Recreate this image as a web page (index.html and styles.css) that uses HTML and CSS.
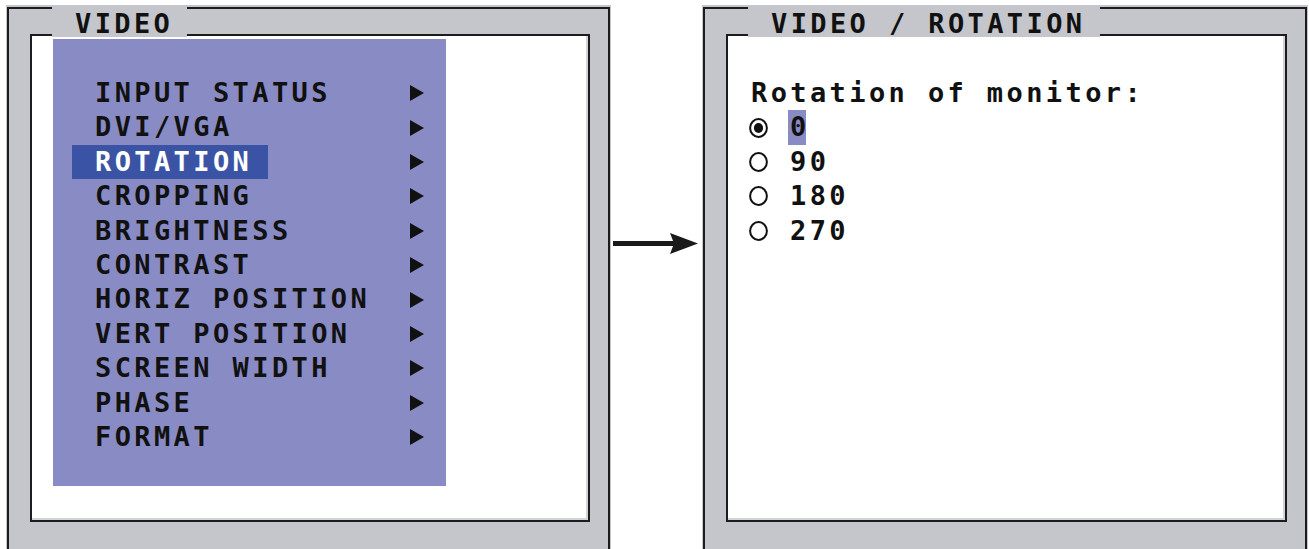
FILE: index.html
```html
<!DOCTYPE html>
<html lang="en">
<head>
<meta charset="utf-8">
<title>Video / Rotation</title>
<link rel="stylesheet" href="styles.css">
</head>
<body>
<div class="stage">
  <section class="panel">
    <div class="title">VIDEO</div>
    <div class="outer">
      <div class="inner">
        <ul class="menu">
          <li class="row"><span class="label">INPUT STATUS</span><svg class="tri" viewBox="0 0 14 16"><polygon points="0,0 14,8 0,16"/></svg></li>
          <li class="row"><span class="label">DVI/VGA</span><svg class="tri" viewBox="0 0 14 16"><polygon points="0,0 14,8 0,16"/></svg></li>
          <li class="row"><span class="label sel">ROTATION</span><svg class="tri" viewBox="0 0 14 16"><polygon points="0,0 14,8 0,16"/></svg></li>
          <li class="row"><span class="label">CROPPING</span><svg class="tri" viewBox="0 0 14 16"><polygon points="0,0 14,8 0,16"/></svg></li>
          <li class="row"><span class="label">BRIGHTNESS</span><svg class="tri" viewBox="0 0 14 16"><polygon points="0,0 14,8 0,16"/></svg></li>
          <li class="row"><span class="label">CONTRAST</span><svg class="tri" viewBox="0 0 14 16"><polygon points="0,0 14,8 0,16"/></svg></li>
          <li class="row"><span class="label">HORIZ POSITION</span><svg class="tri" viewBox="0 0 14 16"><polygon points="0,0 14,8 0,16"/></svg></li>
          <li class="row"><span class="label">VERT POSITION</span><svg class="tri" viewBox="0 0 14 16"><polygon points="0,0 14,8 0,16"/></svg></li>
          <li class="row"><span class="label">SCREEN WIDTH</span><svg class="tri" viewBox="0 0 14 16"><polygon points="0,0 14,8 0,16"/></svg></li>
          <li class="row"><span class="label">PHASE</span><svg class="tri" viewBox="0 0 14 16"><polygon points="0,0 14,8 0,16"/></svg></li>
          <li class="row"><span class="label">FORMAT</span><svg class="tri" viewBox="0 0 14 16"><polygon points="0,0 14,8 0,16"/></svg></li>
        </ul>
      </div>
    </div>
  </section>

  <div class="link">
    <svg class="bigarrow" viewBox="0 0 91 22" width="91" height="22">
      <rect x="2" y="8" width="66" height="5" fill="#1a1a1a"/>
      <polygon points="59,0 87,10.5 59,21 63,10.5" fill="#1a1a1a"/>
    </svg>
  </div>

  <section class="panel">
    <div class="title">VIDEO / ROTATION</div>
    <div class="outer">
      <div class="inner">
        <div class="options">
          <div class="heading">Rotation of monitor:</div>
          <div class="opt">
            <svg class="radio" viewBox="0 0 19 20"><ellipse cx="9.5" cy="10" rx="8.4" ry="8.9" fill="none" stroke="#111" stroke-width="2"/><ellipse cx="9.5" cy="10" rx="4.6" ry="4.9" fill="#111"/></svg>
            <span class="num cur">0</span>
          </div>
          <div class="opt">
            <svg class="radio" viewBox="0 0 19 20"><ellipse cx="9.5" cy="10" rx="8.4" ry="8.9" fill="none" stroke="#111" stroke-width="2"/></svg>
            <span class="num">90</span>
          </div>
          <div class="opt">
            <svg class="radio" viewBox="0 0 19 20"><ellipse cx="9.5" cy="10" rx="8.4" ry="8.9" fill="none" stroke="#111" stroke-width="2"/></svg>
            <span class="num">180</span>
          </div>
          <div class="opt">
            <svg class="radio" viewBox="0 0 19 20"><ellipse cx="9.5" cy="10" rx="8.4" ry="8.9" fill="none" stroke="#111" stroke-width="2"/></svg>
            <span class="num">270</span>
          </div>
        </div>
      </div>
    </div>
  </section>
</div>
</body>
</html>
```

FILE: styles.css
```css
html, body {
  margin: 0;
  padding: 0;
  background: #ffffff;
  overflow: hidden;
}

body {
  font-family: "DejaVu Sans Mono", "Liberation Mono", monospace;
  font-weight: bold;
  font-size: 27px;
  color: #111111;
}

.stage {
  display: flex;
  align-items: flex-start;
  padding: 5px 0 0 6px;
  height: 560px;
}

.panel {
  position: relative;
  width: 605px;
  height: 570px;
  box-sizing: border-box;
  padding: 2px 1px 0 1px;
  background: #c5c6cb;
  flex: none;
}

.panel + .link + .panel {
  width: 606px;
}

.title {
  position: absolute;
  left: 46px;
  top: 0;
  height: 32px;
  padding: 0 14px 0 23px;
  background: #c5c6cb;
  line-height: 37px;
  letter-spacing: 3.4px;
  white-space: pre;
  color: #111111;
}

.outer {
  height: 100%;
  box-sizing: border-box;
  border: 2px solid #1c1c1f;
  padding: 25px 18px 0 21px;
}

.inner {
  height: 488px;
  box-sizing: border-box;
  border: 2px solid #1c1c1f;
  background: #ffffff;
  box-shadow: inset -2px -2px 0 #d2d3d7;
}

.menu {
  list-style: none;
  margin: 3px 0 0 21px;
  padding: 37px 0 0 19px;
  width: 393px;
  height: 447px;
  box-sizing: border-box;
  background: #898bc4;
}

.row {
  display: grid;
  grid-template-columns: 338px 14px;
  align-items: center;
  height: 34.4px;
}

.label {
  justify-self: start;
  line-height: 34.4px;
  padding: 0 16px 0 23px;
  letter-spacing: 3.4px;
  white-space: pre;
}

.label.sel {
  background: #3a53a4;
  color: #ffffff;
}

.tri {
  display: block;
  width: 14px;
  height: 16px;
  fill: #111111;
}

.link {
  width: 91px;
  flex: none;
  padding-top: 228px;
  display: flex;
}

.bigarrow {
  display: block;
}

.options {
  padding: 40px 0 0 21px;
}

.heading {
  padding-left: 2px;
  line-height: 34.4px;
  letter-spacing: 3.4px;
  white-space: pre;
}

.opt {
  display: flex;
  align-items: center;
  height: 34.4px;
  gap: 20px;
}

.radio {
  display: block;
  width: 19px;
  height: 20px;
  flex: none;
}

.num {
  line-height: 34.4px;
  padding-left: 2px;
  letter-spacing: 3.4px;
}

.num.cur {
  letter-spacing: 0;
  background: #898bc4;
}
```
